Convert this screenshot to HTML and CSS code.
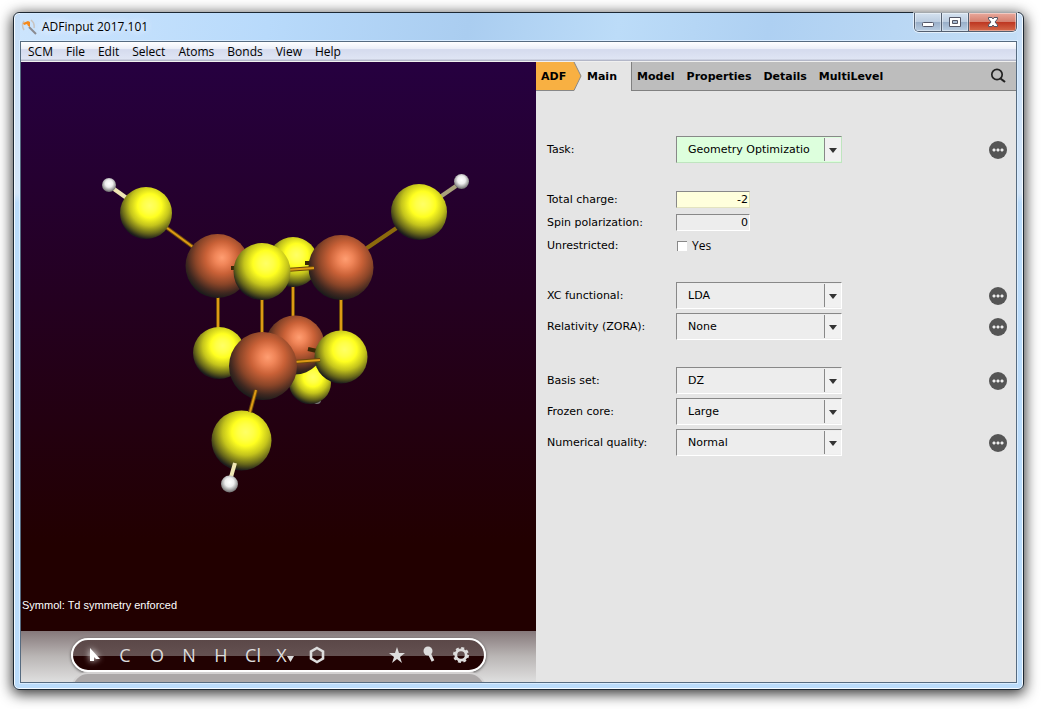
FILE: index.html
```html
<!DOCTYPE html>
<html lang="en">
	<head>
		<meta charset="utf-8">
		<title>ADFinput 2017.101</title>
		<link rel="stylesheet" href="styles.css">
	</head>
	<body>
		<div class="window">
			<header class="titlebar">
				<svg class="appIcon" width="17" height="17" viewBox="0 0 17 17">
					<path d="M3 2Q0 6 3 11M10 1Q14 4 13 9" fill="none" stroke="#c9c4c0" stroke-width="1.5"/>
					<path d="M8 8l7 7" stroke="#8b8b90" stroke-width="2"/>
					<path d="M2 4l5-2 2 1v5l-2-1-1-2-3 1z" fill="#f58a1c"/>
				</svg>
				<span class="title">ADFinput 2017.101</span>
				<div class="winButtons">
					<button class="winButton" aria-label="Minimize">
						<svg width="14" height="12" viewBox="0 0 14 12"><rect x="1.5" y="6.5" width="11" height="4" rx="1" fill="#fff" stroke="#535666"/></svg>
					</button>
					<button class="winButton" aria-label="Maximize">
						<svg width="14" height="12" viewBox="0 0 14 12"><path d="M1.5 1.5h11v9h-11z" fill="#fff" stroke="#535666"/><path d="M4.5 4.5h5v3h-5z" fill="#a9bdd3" stroke="#535666"/></svg>
					</button>
					<button class="winButton winClose" aria-label="Close">
						<svg width="14" height="12" viewBox="0 0 14 12"><path d="M2.5 1.5h3.5l1 1.5 1-1.500h3.500v1.500L9 6l2.500 3v1.500H8L7 9l-1 1.500H2.500V9L5 6 2.500 3z" fill="#fff" stroke="#535666"/></svg>
					</button>
				</div>
			</header>
			<div class="client">
				<nav class="menubar">
					<button>SCM</button>
					<button>File</button>
					<button>Edit</button>
					<button>Select</button>
					<button>Atoms</button>
					<button>Bonds</button>
					<button>View</button>
					<button>Help</button>
				</nav>
				<main class="main">
					<section class="viewer">
						<div class="scene">
							<svg class="molecule" viewBox="21 62 515 569">
								<defs>
									<radialGradient id="sulfur" cx=".57" cy=".36" r=".64">
										<stop offset="0" stop-color="#ffff66"/>
										<stop offset=".2" stop-color="#ffff48"/>
										<stop offset=".36" stop-color="#ffff20"/>
										<stop offset=".6" stop-color="#c4c41c"/>
										<stop offset=".84" stop-color="#66661a"/>
										<stop offset="1" stop-color="#1c1c1c"/>
									</radialGradient>
									<radialGradient id="iron" cx=".57" cy=".37" r=".64">
										<stop offset="0" stop-color="#ff9e72"/>
										<stop offset=".18" stop-color="#f08558"/>
										<stop offset=".4" stop-color="#c96137"/>
										<stop offset=".65" stop-color="#8a4528"/>
										<stop offset=".86" stop-color="#402820"/>
										<stop offset="1" stop-color="#1b1b1b"/>
									</radialGradient>
									<radialGradient id="hydrogen" cx=".5" cy=".4" r=".65">
										<stop offset="0" stop-color="#fff"/>
										<stop offset=".4" stop-color="#eee"/>
										<stop offset="1" stop-color="#555"/>
									</radialGradient>
								</defs>
								<!-- back atoms -->
								<circle cx="317" cy="400" r="4" fill="#777"/>
								<circle cx="310" cy="383" r="21" fill="url(#sulfur)"/>
								<path class="bond" d="M293 284v36M218 294v36M341 296v40"/>
								<path class="bondLight" d="M293 284v36M218 294v36M341 296v40"/>
								<circle cx="295" cy="345" r="29.5" fill="url(#iron)"/>
								<circle cx="293" cy="262" r="25" fill="url(#sulfur)"/>
								<path class="bondDark" d="M305 263h8M308 349l9 2"/>
								<circle cx="219" cy="353" r="26" fill="url(#sulfur)"/>
								<!-- upper arms -->
								<path class="bondPale" d="M114 189l14 10"/>
								<circle cx="109" cy="185" r="7" fill="url(#hydrogen)"/>
								<path class="bond" d="M163 225l34 25"/>
								<path class="bondLight" d="M163 225l34 25"/>
								<circle cx="146" cy="213" r="26" fill="url(#sulfur)"/>
								<circle cx="217.5" cy="266" r="32" fill="url(#iron)"/>
								<path class="bondDark" d="M231 268h7"/>
								<path class="bondOlive" d="M398 227l-34 23"/>
								<path class="bondPale bondDim" d="M440 197l16-11"/>
								<circle cx="461.5" cy="181.5" r="7.5" fill="url(#hydrogen)"/>
								<circle cx="419" cy="212" r="28" fill="url(#sulfur)"/>
								<circle cx="341" cy="267.5" r="32.5" fill="url(#iron)"/>
								<path class="bond" d="M286 270l28-2M262 296v40"/>
								<path class="bondLight" d="M286 270l28-2M262 296v40"/>
								<circle cx="262" cy="271.5" r="28.5" fill="url(#sulfur)"/>
								<!-- front -->
								<circle cx="341" cy="357" r="26.5" fill="url(#sulfur)"/>
								<path class="bond" d="M294 362l26-2"/>
								<path class="bondLight" d="M294 362l26-2"/>
								<circle cx="263" cy="366" r="34" fill="url(#iron)"/>
								<circle cx="241.5" cy="440.5" r="30" fill="url(#sulfur)"/>
								<path class="bond" d="M256 390l-6 22"/>
								<path class="bondLight" d="M256 390l-6 22"/>
								<path class="bondPale" d="M235 463l-4 14"/>
								<circle cx="229.5" cy="484" r="8.5" fill="url(#hydrogen)"/>
							</svg>
							<p class="status">Symmol: Td symmetry enforced</p>
						</div>
						<div class="dock">
							<div class="pill">
								<button aria-label="Pointer" class="pointer">
									<svg width="20" height="22" viewBox="0 0 20 22"><path d="M7 4l10 11H13l-2-2v4H7z" fill="#fff"/></svg>
								</button>
								<button>C</button>
								<button>O</button>
								<button>N</button>
								<button>H</button>
								<button>Cl</button>
								<button class="other">X<svg width="7" height="6" viewBox="0 0 7 6"><path d="M0 0h7l-3.500 6z" fill="#ddd"/></svg></button>
								<button aria-label="Ring">
									<svg width="16" height="18" viewBox="0 0 16 18"><path d="M8 2l6 3.500v7L8 16l-6-3.500v-7z" fill="none" stroke="#ddd" stroke-width="2.600"/></svg>
								</button>
								<button aria-label="Favourites" class="tools">
									<svg width="18" height="18" viewBox="0 0 18 18"><path d="M9 1l2 6h6l-5 4 2 6-5-4-5 4 2-6-5-4h6z" fill="#ddd"/></svg>
								</button>
								<button aria-label="Pre-optimize">
									<svg width="16" height="18" viewBox="0 0 16 18"><circle cx="7" cy="5" r="4.500" fill="#ddd"/><path d="M8 7l4 8" stroke="#ddd" stroke-width="3"/></svg>
								</button>
								<button aria-label="Settings">
									<svg width="18" height="18" viewBox="0 0 18 18"><circle cx="9" cy="9" r="5.200" fill="none" stroke="#ddd" stroke-width="2.800"/><circle cx="9" cy="9" r="7" fill="none" stroke="#ddd" stroke-width="2" stroke-dasharray="3 2.500"/></svg>
								</button>
							</div>
							<div class="reflection"></div>
						</div>
					</section>
					<section class="panel">
						<nav class="tabs">
							<button class="tab tabAdf"><svg class="tabShape" width="46" height="29" viewBox="0 0 46 29"><path d="M0 0h38l7 14-7 14.500H0z" fill="#f8b042"/><path d="M38 0l7 14-7 14.500H0" fill="none" stroke="#888"/></svg><span>ADF</span></button>
							<button class="tab tabActive">Main</button>
							<div class="tabRest">
								<button class="tab">Model</button>
								<button class="tab">Properties</button>
								<button class="tab">Details</button>
								<button class="tab">MultiLevel</button>
								<button class="search" aria-label="Search">
									<svg width="16" height="16" viewBox="0 0 16 16"><circle cx="7" cy="6.500" r="5.200" fill="none" stroke="#222" stroke-width="1.700"/><path d="M10.500 10.500l4.500 3.500" stroke="#222" stroke-width="2.200"/></svg>
								</button>
							</div>
						</nav>
						<form class="form">
							<div class="group">
								<div class="row">
									<label for="task">Task:</label>
									<span class="dropdown changed"><select id="task"><option>Geometry Optimizatio</option></select></span>
									<button type="button" class="more" aria-label="Task details"></button>
								</div>
							</div>
							<div class="group numbers">
								<div class="row">
									<label for="charge">Total charge:</label>
									<input id="charge" class="number edited" type="text" value="-2">
								</div>
								<div class="row">
									<label for="spin">Spin polarization:</label>
									<input id="spin" class="number" type="text" value="0">
								</div>
								<div class="row">
									<span>Unrestricted:</span>
									<label class="check"><input type="checkbox">Yes</label>
								</div>
							</div>
							<div class="group">
								<div class="row">
									<label for="xc">XC functional:</label>
									<span class="dropdown"><select id="xc"><option>LDA</option></select></span>
									<button type="button" class="more" aria-label="XC functional details"></button>
								</div>
								<div class="row">
									<label for="zora">Relativity (ZORA):</label>
									<span class="dropdown"><select id="zora"><option>None</option></select></span>
									<button type="button" class="more" aria-label="Relativity details"></button>
								</div>
							</div>
							<div class="group">
								<div class="row">
									<label for="basis">Basis set:</label>
									<span class="dropdown"><select id="basis"><option>DZ</option></select></span>
									<button type="button" class="more" aria-label="Basis set details"></button>
								</div>
								<div class="row">
									<label for="core">Frozen core:</label>
									<span class="dropdown"><select id="core"><option>Large</option></select></span>
								</div>
								<div class="row">
									<label for="quality">Numerical quality:</label>
									<span class="dropdown"><select id="quality"><option>Normal</option></select></span>
									<button type="button" class="more" aria-label="Numerical quality details"></button>
								</div>
							</div>
						</form>
					</section>
				</main>
			</div>
		</div>
	</body>
</html>
```
FILE: styles.css
```css
*{
	box-sizing: border-box;
}
body{
	margin: 0;
	padding: 12px 18px 19px 13px;
	min-height: 100vh;
	display: flex;
	background-color: #fff;
	font-family: "DejaVu Sans", sans-serif;
	font-size: 11px;
	color: #000;
}
button, input, select{
	font: inherit;
	color: inherit;
	margin: 0;
	padding: 0;
	border: 0;
	background: none;
}
p{
	margin: 0;
}
svg{
	display: block;
}
.window{
	flex: 1;
	display: flex;
	flex-direction: column;
	padding: 0 6px 6px;
	border: 1px solid #1d2833;
	border-radius: 6px;
	background: linear-gradient(#c6def7 0, #d5e6f8 180px, #bbdcfb 190px);
	box-shadow: inset 0 0 0 1px #f4faff, 0 3px 14px 1px rgba(0,0,0,.8);
}
.titlebar{
	display: flex;
	align-items: flex-start;
	height: 28px;
	background: linear-gradient(100deg, rgba(205,230,255,.8), #b8dafb 25%, #aacdf0 45%, #bcdcf8 60%, #aed0f2 75%, #c4def6);
	font-family: "Open Sans", sans-serif;
	font-size: 12px;
}
.appIcon{
	margin: 6px 0 0 1px;
}
.title{
	flex: 1;
	padding: 0 4px;
	line-height: 28px;
	text-shadow: 0 0 8px #fff, 0 0 8px #fff;
}
.winButtons{
	display: flex;
	height: 19px;
	border: 1px solid #535f70;
	border-top: 0;
	border-radius: 0 0 5px 5px;
	overflow: hidden;
	box-shadow: 0 0 0 1px rgba(255,255,255,.6);
}
.winButton{
	display: flex;
	align-items: center;
	justify-content: center;
	width: 27px;
	border-right: 1px solid #535f70;
	background: linear-gradient(#d5e2f0, #bccde0 48%, #98aec8 50%, #b9cde2);
	box-shadow: inset 0 0 0 1px rgba(255,255,255,.4);
}
.winClose{
	width: 47px;
	border-right: 0;
	background: linear-gradient(#e9a99c, #d5806f 48%, #bd3520 50%, #d56a4a);
}
.client{
	flex: 1;
	display: flex;
	flex-direction: column;
	border: 1px solid #566b80;
	box-shadow: 0 0 0 1px #d8ecff;
}
.menubar{
	display: flex;
	height: 20px;
	padding-left: 7px;
	gap: 13px;
	border-bottom: 1px solid #f0f0f0;
	background: linear-gradient(#fff, #eceff8 35%, #d5dbee 40%, #dfe5f4 90%, #b3b7c8 95%);
	font-family: "Open Sans", sans-serif;
	font-size: 12px;
}
.main{
	flex: 1;
	display: flex;
}
.viewer{
	flex: 1;
	display: flex;
	flex-direction: column;
}
.scene{
	flex: 1;
	position: relative;
	background: linear-gradient(#260040, #220000 85%);
}
.molecule{
	width: 100%;
	max-height: 100%;
}
.molecule path{
	fill: none;
}
.bond{
	stroke: #6e4a0a;
	stroke-width: 4;
}
.bondLight{
	stroke: #dc9a14;
	stroke-width: 2;
}
.bondOlive{
	stroke: #8c6a0c;
	stroke-width: 4;
}
.bondDark{
	stroke: #3a2906;
	stroke-width: 4;
}
.bondPale{
	stroke: #efe6b4;
	stroke-width: 4;
}
.bondDim{
	stroke: #a9a27c;
}
/* message drawn over the 3D scene */
.status{
	position: absolute;
	left: 1px;
	bottom: 18px;
	line-height: 16px;
	font-family: "Liberation Sans", sans-serif;
	color: #fff;
}
.dock{
	display: flex;
	flex-direction: column;
	align-items: center;
	height: 51px;
	padding-top: 7px;
	overflow: hidden;
	background: linear-gradient(#85787a, #bab6b5 50%, #dfdfdf);
}
.pill{
	display: flex;
	flex: none;
	width: 415px;
	height: 34px;
	padding-left: 4px;
	border: 2px solid #fff;
	border-radius: 17px;
	background: linear-gradient(#5b4848, #645151 52%, #220202 53%);
	box-shadow: 0 1px 3px rgba(0,0,0,.6);
	font-family: "Open Sans", sans-serif;
	font-size: 18px;
	font-weight: 500;
	color: #ddd;
}
.pill button{
	display: flex;
	flex: none;
	align-items: center;
	justify-content: center;
	width: 32px;
}
.pill .pointer svg{
	filter: drop-shadow(0 0 3px #fff);
}
.pill .other svg{
	margin-top: 8px;
}
.pill .tools{
	margin-left: 48px;
}
.reflection{
	flex: none;
	width: 415px;
	height: 34px;
	border: 2px solid #d4d2d2;
	border-radius: 17px;
	background: #aca8a8;
}
.panel{
	width: 480px;
	background-color: #e5e5e5;
}
.tabs{
	display: flex;
	height: 29px;
	font-weight: bold;
}
.tabAdf{
	position: relative;
	width: 46px;
	padding-left: 5px;
	text-align: left;
}
/* arrow outline behind the label */
.tabShape{
	position: absolute;
	left: 0;
	top: 0;
}
.tabAdf span{
	position: relative;
}
.tabActive{
	width: 49px;
	padding-left: 5px;
	text-align: left;
}
.tabRest{
	flex: 1;
	display: flex;
	gap: 12px;
	padding: 0 10px 0 5px;
	border-left: 1px solid #808080;
	border-bottom: 1px solid #808080;
	background-color: #bdbdbd;
}
.search{
	margin-left: auto;
}
.form{
	display: flex;
	flex-direction: column;
	gap: 27px;
	padding: 45px 9px 0 11px;
}
.group{
	display: flex;
	flex-direction: column;
	gap: 4px;
}
.numbers{
	gap: 6px;
	padding: 1px 0;
}
.row{
	display: grid;
	grid-template-columns: 129px 1fr 18px;
	align-items: center;
	height: 27px;
}
.numbers .row{
	height: 17px;
}
.dropdown{
	display: flex;
	position: relative;
	width: 166px;
	height: 27px;
	border: 1px solid #fff;
	border-top-color: #888;
	border-left-color: #888;
	background-color: #ededed;
}
.dropdown select{
	flex: 1;
	appearance: none;
	padding-left: 11px;
}
/* arrow cell over the right end of the select */
.dropdown::after{
	content: "";
	position: absolute;
	top: 1px;
	bottom: 1px;
	right: 0;
	width: 16px;
	border-left: 1px solid #888;
	background-color: #f1f1f1;
	pointer-events: none;
}
.dropdown::before{
	content: "";
	position: absolute;
	z-index: 1;
	top: 11px;
	right: 4px;
	border: 4px solid transparent;
	border-top: 5px solid #333;
	border-bottom: 0;
	pointer-events: none;
}
.changed{
	background-color: #dfd;
	border-right-color: #bfe5bf;
	border-bottom-color: #bfe5bf;
}
.number{
	width: 74px;
	height: 17px;
	padding: 0 1px;
	border: 1px solid #fff;
	border-top-color: #888;
	border-left-color: #888;
	background-color: #ededed;
	text-align: right;
}
.edited{
	background-color: #ffffdc;
	border-right-color: #e3e3c0;
	border-bottom-color: #e3e3c0;
}
.check{
	display: flex;
	align-items: center;
	gap: 5px;
	padding-left: 1px;
	font-family: "Open Sans", sans-serif;
	font-size: 12px;
}
.check input{
	appearance: none;
	width: 10px;
	height: 10px;
	border-top: 1px solid #888;
	border-left: 1px solid #888;
	background-color: #fff;
}
.more{
	display: flex;
	align-items: center;
	justify-content: center;
	width: 18px;
	height: 18px;
	border-radius: 50%;
	background-color: #555;
}
.more::before{
	content: "";
	width: 12px;
	height: 4px;
	background: radial-gradient(circle, #eee 1px, transparent 2px) 0 0 / 4px 4px;
}
```
